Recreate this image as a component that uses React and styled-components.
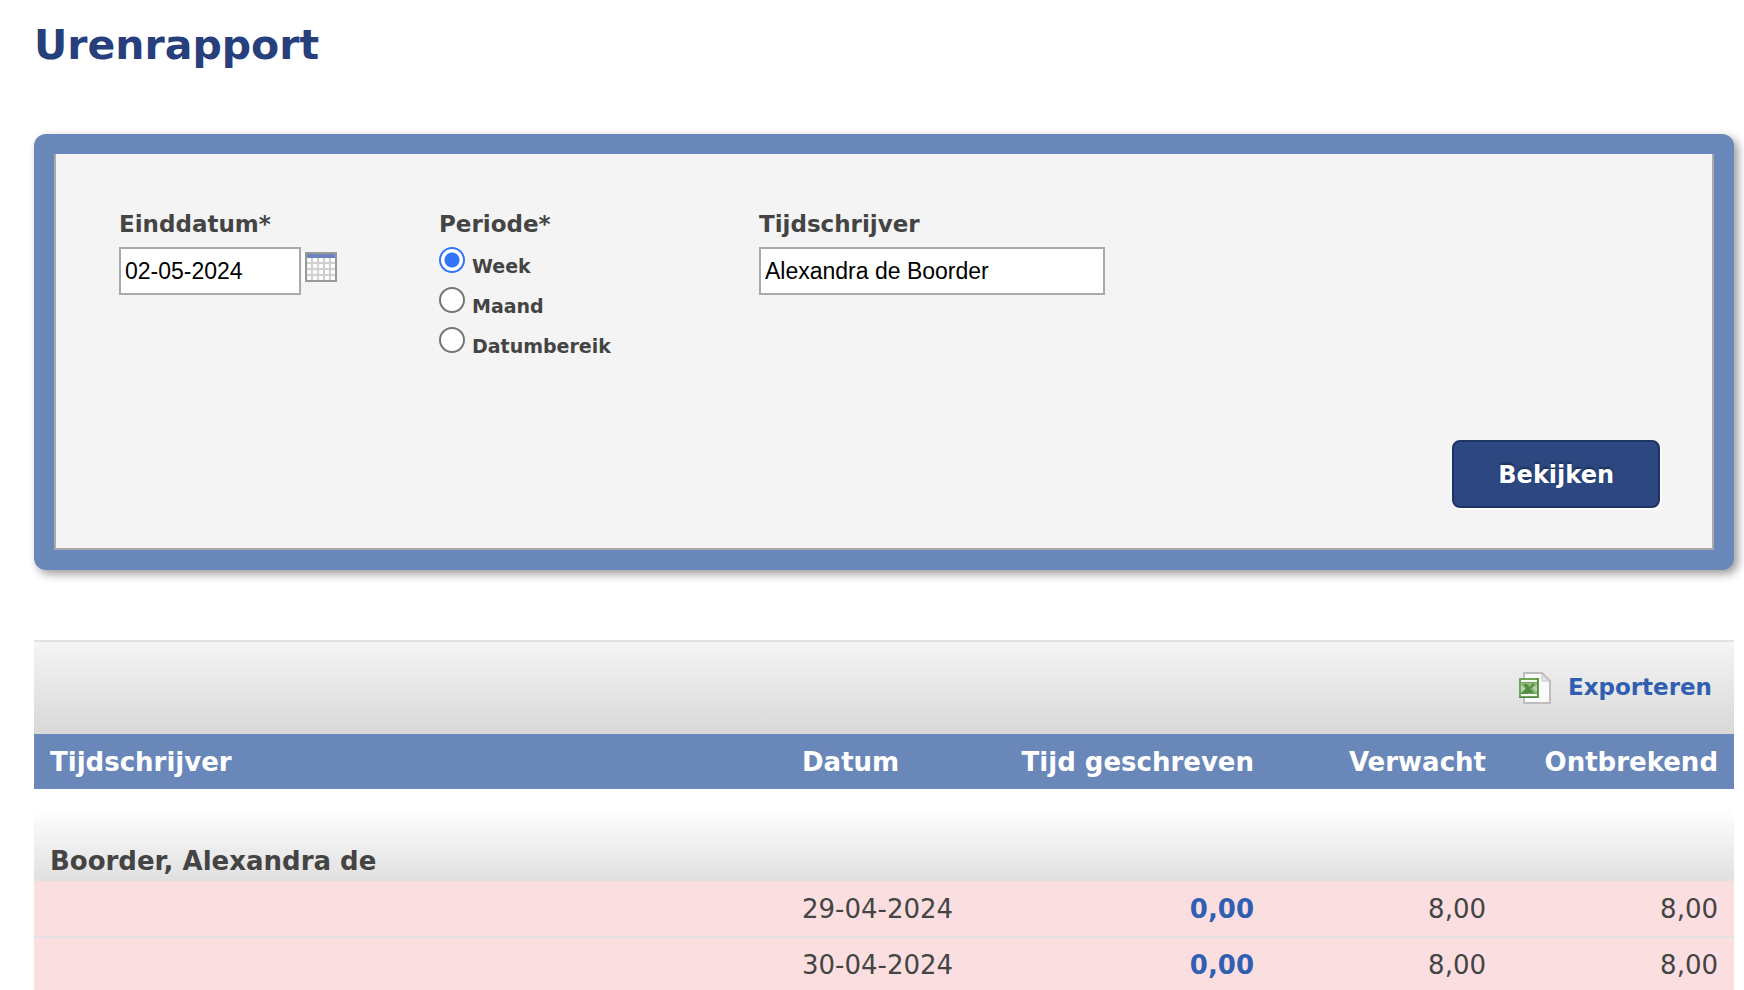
import React, { useState } from 'react';
import styled, { createGlobalStyle } from 'styled-components';

const GlobalStyle = createGlobalStyle`
  * {
    box-sizing: border-box;
  }

  body {
    margin: 0;
    background: #fff;
    color: #444;
    font-family: Verdana, 'DejaVu Sans', sans-serif;
    overflow-x: hidden;
  }
`;

const Page = styled.main`
  padding: 20px 10px 0 34px;
`;

const Title = styled.h1`
  margin: 0 0 64px;
  color: #27407c;
  font-size: 41px;
  line-height: 50px;
`;

const Panel = styled.section`
  padding: 20px;
  background: #6987b9;
  border-radius: 12px;
  box-shadow: 4px 4px 10px rgba(0, 0, 0, 0.4);
`;

const FilterForm = styled.form`
  display: flex;
  flex-direction: column;
  justify-content: space-between;
  min-height: 396px;
  padding: 54px 52px 40px 63px;
  background: #f4f4f4;
  border: 2px solid #aaa;
  border-top: 0;
`;

const Fields = styled.div`
  display: flex;
`;

const Field = styled.div`
  flex: 0 0 320px;
`;

const RadioGroup = styled.fieldset`
  flex: 0 0 320px;
  margin: 0;
  padding: 0;
  border: 0;
`;

const labelStyle = `
  display: block;
  height: 39px;
  padding: 0;
  font-size: 23px;
  font-weight: bold;
  line-height: 32px;
`;

const Label = styled.label`
  ${labelStyle}
`;

const Legend = styled.legend`
  ${labelStyle}
`;

const InputRow = styled.div`
  display: flex;
  gap: 1px;
`;

const TextInput = styled.input`
  width: ${(props) => props.$width}px;
  height: 48px;
  padding: 0 4px;
  border: 2px solid #a9a9a9;
  border-radius: 0;
  background: #fff;
  color: #000;
  font-family: Helvetica, 'Liberation Sans', sans-serif;
  font-size: 23px;
`;

const IconButton = styled.button`
  display: block;
  height: 30px;
  margin-top: 5px;
  padding: 0 0 0 3px;
  border: 0;
  background: #fff;
  cursor: pointer;
`;

const RadioLabel = styled.label`
  display: flex;
  gap: 7px;
  height: 40px;
  font-size: 19px;
  font-weight: bold;
  line-height: 38px;
`;

const Radio = styled.input`
  appearance: none;
  width: 26px;
  height: 26px;
  margin: 0;
  border: 2px solid #767676;
  border-radius: 50%;
  background: #fff;

  &:checked {
    border-color: #3375f6;
    background: radial-gradient(circle, #3375f6 0 7px, #fff 8px);
  }
`;

const SubmitButton = styled.button`
  align-self: flex-end;
  height: 68px;
  padding: 2px 44px 0;
  border: 2px solid #1e3563;
  border-radius: 8px;
  background: #2d4880;
  box-shadow: 2px 2px 0 #fff;
  color: #fff;
  font-family: inherit;
  font-size: 24px;
  font-weight: bold;
  text-shadow: 0 -2px 2px #1a2f5c;
  cursor: pointer;
`;

const Report = styled.section`
  margin-top: 70px;
`;

const Toolbar = styled.div`
  display: flex;
  justify-content: flex-end;
  align-items: center;
  height: 94px;
  padding-right: 22px;
  border-top: 2px solid #e2e2e2;
  background: linear-gradient(#f5f5f5, #d8d8d8);
`;

const ExportLink = styled.a`
  display: flex;
  gap: 17px;
  color: #305fb2;
  font-size: 23px;
  font-weight: bold;
  line-height: 30px;
  text-decoration: none;
`;

const Table = styled.table`
  width: 100%;
  table-layout: fixed;
  border-collapse: collapse;
  font-size: 26px;
  line-height: 32px;
`;

const Col = styled.col`
  width: ${(props) => props.$width}px;
`;

const HeadCell = styled.th`
  height: 55px;
  padding: 0 16px;
  background: #6987b9;
  color: #fff;
  text-align: ${(props) => props.$align || 'left'};
  white-space: nowrap;
`;

const GroupCell = styled.th`
  height: 92px;
  padding: 0 16px 4px;
  background: linear-gradient(#fff 20%, #e0e0e0);
  text-align: left;
  vertical-align: bottom;
`;

const Row = styled.tr`
  background: #fbdfe0;
`;

const Cell = styled.td`
  height: 56px;
  padding: 0 16px;
  border-bottom: 2px solid #e2e2e2;
  text-align: ${(props) => props.$align || 'left'};
`;

const HoursLink = styled.a`
  color: #305fb2;
  font-weight: bold;
  text-decoration: none;
`;

const CalendarIcon = () => (
  <svg width="32" height="30" viewBox="0 0 32 30" display="block" aria-hidden="true">
    <rect width="32" height="30" fill="#999" />
    <rect x="2" y="2" width="28" height="4" fill="#6d83c0" />
    <rect x="2" y="6" width="28" height="22" fill="#d0d0d0" />
    {[6, 12, 18, 24].map((y) =>
      [2, 8, 14, 20, 26].map((x) => (
        <rect key={`${x}-${y}`} x={x} y={y} width="4" height="4" rx="1" fill="#fff" />
      ))
    )}
  </svg>
);

const ExcelIcon = () => (
  <svg width="32" height="32" viewBox="0 0 32 32" aria-hidden="true">
    <path d="M5 1h18l8 8v22H5z" fill="#fafafa" stroke="#bdbdbd" strokeWidth="2" />
    <path d="M23 2v7h7z" fill="#e2e2e2" stroke="#c8c8c8" strokeWidth="1" />
    <rect x="0" y="6" width="20" height="20" fill="#6fa557" />
    <path d="M19 6v20H0v-1h18V6z" fill="#4f8540" />
    <path d="M2 9h16M2 23h16" stroke="#f2f8ee" strokeWidth="2" />
    <rect x="2" y="11" width="16" height="10" fill="#8fbb7c" />
    <path d="M4 12h4l7 9h-5z" fill="#548c44" />
    <path d="M15 12l-4 4M8 17l-4 4h4l2-2z" fill="#548c44" stroke="#548c44" strokeWidth="2" />
    <path d="M2 13l4 4-4 3z" fill="#b9d6ac" />
    <path d="M18 13l-4 3 4 4z" fill="#b9d6ac" />
  </svg>
);

const periods = ['Week', 'Maand', 'Datumbereik'];

const rows = [
  { date: '29-04-2024', written: '0,00', expected: '8,00', missing: '8,00' },
  { date: '30-04-2024', written: '0,00', expected: '8,00', missing: '8,00' },
];

const App = () => {
  const [endDate, setEndDate] = useState('02-05-2024');
  const [period, setPeriod] = useState('Week');
  const [employee, setEmployee] = useState('Alexandra de Boorder');

  const handleSubmit = (e) => {
    e.preventDefault();
  };

  return (
    <Page>
      <GlobalStyle />
      <Title>Urenrapport</Title>

      <Panel>
        <FilterForm onSubmit={handleSubmit}>
          <Fields>
            <Field>
              <Label htmlFor="endDate">Einddatum*</Label>
              <InputRow>
                <TextInput
                  id="endDate"
                  type="text"
                  $width={182}
                  value={endDate}
                  onChange={(e) => setEndDate(e.target.value)}
                />
                <IconButton type="button" aria-label="Kies datum">
                  <CalendarIcon />
                </IconButton>
              </InputRow>
            </Field>

            <RadioGroup>
              <Legend>Periode*</Legend>
              {periods.map((name) => (
                <RadioLabel key={name}>
                  <Radio
                    type="radio"
                    name="period"
                    value={name}
                    checked={period === name}
                    onChange={() => setPeriod(name)}
                  />
                  {name}
                </RadioLabel>
              ))}
            </RadioGroup>

            <Field>
              <Label htmlFor="employee">Tijdschrijver</Label>
              <TextInput
                id="employee"
                type="text"
                $width={346}
                value={employee}
                onChange={(e) => setEmployee(e.target.value)}
              />
            </Field>
          </Fields>

          <SubmitButton type="submit">Bekijken</SubmitButton>
        </FilterForm>
      </Panel>

      <Report>
        <Toolbar>
          <ExportLink href="#export">
            <ExcelIcon />
            Exporteren
          </ExportLink>
        </Toolbar>

        <Table>
          <colgroup>
            <col />
            <Col $width={216} />
            <Col $width={268} />
            <Col $width={232} />
            <Col $width={232} />
          </colgroup>
          <thead>
            <tr>
              <HeadCell>Tijdschrijver</HeadCell>
              <HeadCell>Datum</HeadCell>
              <HeadCell $align="right">Tijd geschreven</HeadCell>
              <HeadCell $align="right">Verwacht</HeadCell>
              <HeadCell $align="right">Ontbrekend</HeadCell>
            </tr>
          </thead>
          <tbody>
            <tr>
              <GroupCell colSpan={5}>Boorder, Alexandra de</GroupCell>
            </tr>
            {rows.map((row) => (
              <Row key={row.date}>
                <Cell />
                <Cell>{row.date}</Cell>
                <Cell $align="right">
                  <HoursLink href={`#${row.date}`}>{row.written}</HoursLink>
                </Cell>
                <Cell $align="right">{row.expected}</Cell>
                <Cell $align="right">{row.missing}</Cell>
              </Row>
            ))}
          </tbody>
        </Table>
      </Report>
    </Page>
  );
};

export default App;
